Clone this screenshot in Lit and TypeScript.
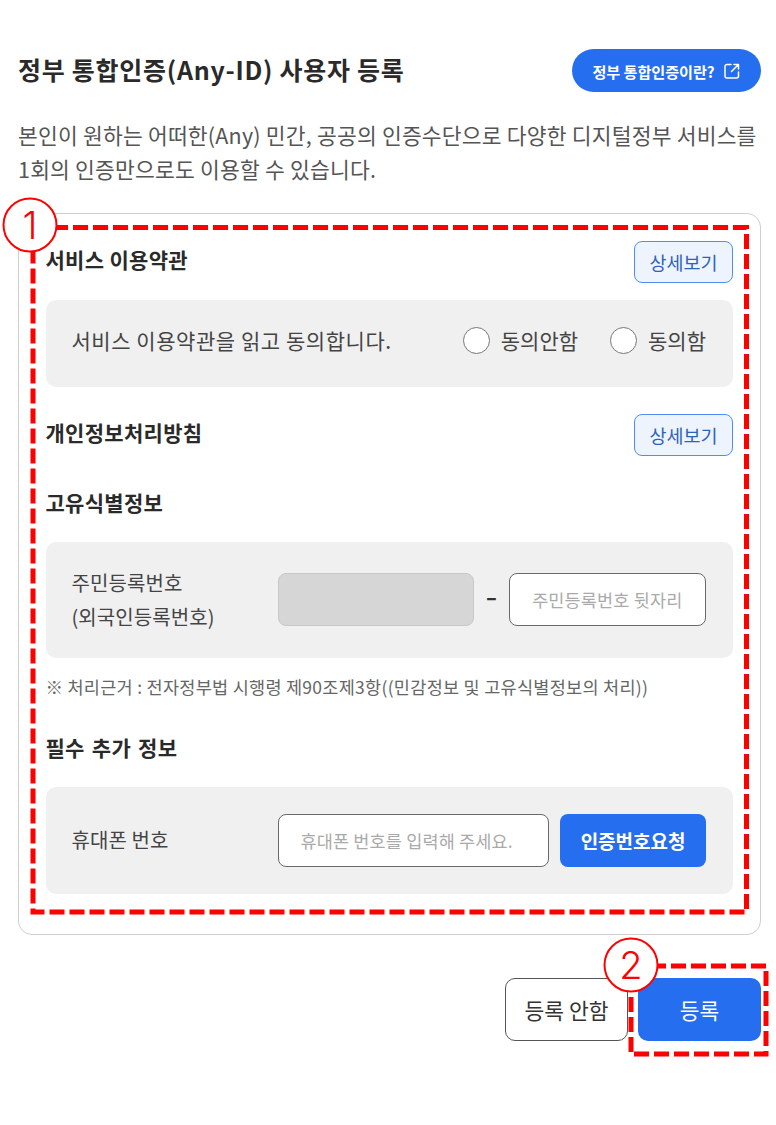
import { LitElement, html, css } from "lit";
import { customElement } from "lit/decorators.js";

@customElement("app-root")
export class AppRoot extends LitElement {
  static styles = css`
    :host { display: block; position: relative; width: 776px; height: 1125px; background: #fff; overflow: hidden;
      font-family: "Noto Sans CJK KR", "Noto Sans", sans-serif; color: #222; box-sizing: border-box; padding: 49px 15px 0 18px; }
    * { box-sizing: border-box; }
    .top { display: flex; justify-content: space-between; align-items: center; height: 43px; }
    h1 { margin: 0; font-size: 25px; font-weight: 700; letter-spacing: 0.72px; line-height: 40px; color: #2a2a2a; position: relative; top: -2px; }
    .about { width: 189px; height: 43px; border-radius: 22px; background: #256ef0; color: #fff; display: flex; align-items: center; justify-content: center; gap: 8px; font-size: 15.2px; font-weight: 700; letter-spacing: -0.1px; }
    .about svg { width: 18px; height: 18px; }
    .desc { margin: 26px 0 0; font-size: 21.5px; line-height: 34px; color: #555; letter-spacing: 0.2px; white-space: nowrap; height: 68px; }
    .card { margin-top: 27px; height: 722px; border: 1.5px solid #cfcfcf; border-radius: 14px; padding: 26.5px 27px 0 26.5px; display: flex; flex-direction: column; }
    .head { display: flex; justify-content: space-between; align-items: center; height: 42px; }
    h2 { margin: 0; font-size: 21px; font-weight: 700; letter-spacing: 0.3px; color: #2a2a2a; line-height: 30px; }
    .head h2 { position: relative; top: -3px; }
    .detail { width: 99px; height: 42px; border: 1.5px solid #4f8df5; border-radius: 8px; background: #eef4fe; color: #2f63b8; font-size: 18.5px; display: flex; align-items: center; justify-content: center; }
    .panel { background: #f0f0f0; border-radius: 10px; padding: 0 27px; display: flex; align-items: center; }
    .agree { margin-top: 17px; height: 87px; justify-content: space-between; font-size: 21px; color: #444; padding-bottom: 6px; }
    .agree > span { letter-spacing: 0.55px; margin-left: -1px; }
    .radios { display: flex; gap: 32px; }
    .radio { display: flex; align-items: center; gap: 11px; color: #444; }
    .dot { width: 27px; height: 27px; border-radius: 50%; background: #fff; border: 1.5px solid #777; }
    .h2b { margin-top: 27px; }
    .sub { margin-top: 31px; height: 30px; }
    .id { margin-top: 25px; height: 116px; }
    .lbl { width: 205px; font-size: 20px; line-height: 34px; color: #444; letter-spacing: 0.1px; flex: none; margin-left: -1px; margin-right: 1px; }
    .box { height: 53px; border-radius: 8px; display: flex; align-items: center; padding-left: 22px; font-size: 17.5px; color: #aaa; letter-spacing: 0.15px; white-space: nowrap; }
    .grey { width: 198px; background: #d6d6d6; border: 1px solid #c8c8c8; }
    .dash { width: 35px; text-align: center; font-weight: 700; color: #333; font-size: 20px; position: relative; top: -3px; transform: scaleX(1.6); }
    .inp { width: 198px; background: #fff; border: 1.5px solid #6a6a6a; }
    .note { margin: 15px 0 0; font-size: 17.5px; line-height: 28px; color: #666; letter-spacing: 0.28px; white-space: nowrap; }
    .sub2 { margin-top: 31px; height: 30px; word-spacing: 2px; }
    .phone { margin-top: 25px; height: 107px; }
    .phone .inp { width: 272px; }
    .req { width: 146px; height: 53px; margin-left: 11px; border-radius: 8px; background: #256ef0; color: #fff; font-weight: 700; font-size: 19px; display: flex; align-items: center; justify-content: center; }
    .foot { display: flex; justify-content: flex-end; gap: 10px; margin-top: 43px; }
    .foot div { width: 123px; height: 63px; border-radius: 10px; display: flex; align-items: center; justify-content: center; font-size: 21.5px; }
    .no { background: #fff; border: 1.5px solid #555; color: #333; }
    .yes { background: #256ef0; color: #fff; }
    .marks { position: absolute; left: 0; top: 0; width: 776px; height: 1125px; pointer-events: none; }
    .marks rect { fill: none; stroke: #f00; stroke-width: 5; stroke-dasharray: 15 5; }
    .marks circle { fill: #fff; stroke: #f00; stroke-width: 2; }
    .num { position: absolute; width: 54px; height: 54px; display: flex; align-items: center; justify-content: center; color: #f00; font-family: Inter, "Liberation Sans", sans-serif; font-weight: 300; font-size: 38px; }
    .n1 { left: 3px; top: 198px; }
    .n2 { left: 604px; top: 938px; }
  `;

  render() {
    return html`
      <div class="top">
        <h1>정부 통합인증(Any-ID) 사용자 등록</h1>
        <div class="about">정부 통합인증이란?
          <svg viewBox="0 0 18 18" fill="none" stroke="#fff" stroke-width="1.5" stroke-linecap="round" stroke-linejoin="round"><path d="M8 2.5H4a2 2 0 0 0-2 2v9.500a2 2 0 0 0 2 2h9.500a2 2 0 0 0 2-2v-4"/><path d="M11 2.500h4.500V7M15.500 2.500L8.500 9.500"/></svg>
        </div>
      </div>
      <p class="desc">본인이 원하는 어떠한(Any) 민간, 공공의 인증수단으로 다양한 디지털정부 서비스를<br>1회의 인증만으로도 이용할 수 있습니다.</p>
      <div class="card">
        <div class="head"><h2>서비스 이용약관</h2><div class="detail">상세보기</div></div>
        <div class="panel agree">
          <span>서비스 이용약관을 읽고 동의합니다.</span>
          <div class="radios">
            <div class="radio"><span class="dot"></span>동의안함</div>
            <div class="radio"><span class="dot"></span>동의함</div>
          </div>
        </div>
        <div class="head h2b"><h2>개인정보처리방침</h2><div class="detail">상세보기</div></div>
        <h2 class="sub">고유식별정보</h2>
        <div class="panel id">
          <div class="lbl">주민등록번호<br>(외국인등록번호)</div>
          <div class="box grey"></div>
          <div class="dash">-</div>
          <div class="box inp">주민등록번호 뒷자리</div>
        </div>
        <p class="note">※ 처리근거 : 전자정부법 시행령 제90조제3항((민감정보 및 고유식별정보의 처리))</p>
        <h2 class="sub2">필수 추가 정보</h2>
        <div class="panel phone">
          <div class="lbl">휴대폰 번호</div>
          <div class="box inp">휴대폰 번호를 입력해 주세요.</div>
          <div class="req">인증번호요청</div>
        </div>
      </div>
      <div class="foot">
        <div class="no">등록 안함</div>
        <div class="yes">등록</div>
      </div>
      <svg class="marks" viewBox="0 0 776 1125">
        <rect x="33" y="227.5" width="713.500" height="684.500"></rect>
        <rect x="631" y="966" width="135" height="88"></rect>
        <circle cx="30" cy="225" r="26.500"></circle>
        <circle cx="631" cy="965" r="26.500"></circle>
      </svg>
      <div class="num n1">1</div>
      <div class="num n2">2</div>
    `;
  }
}
